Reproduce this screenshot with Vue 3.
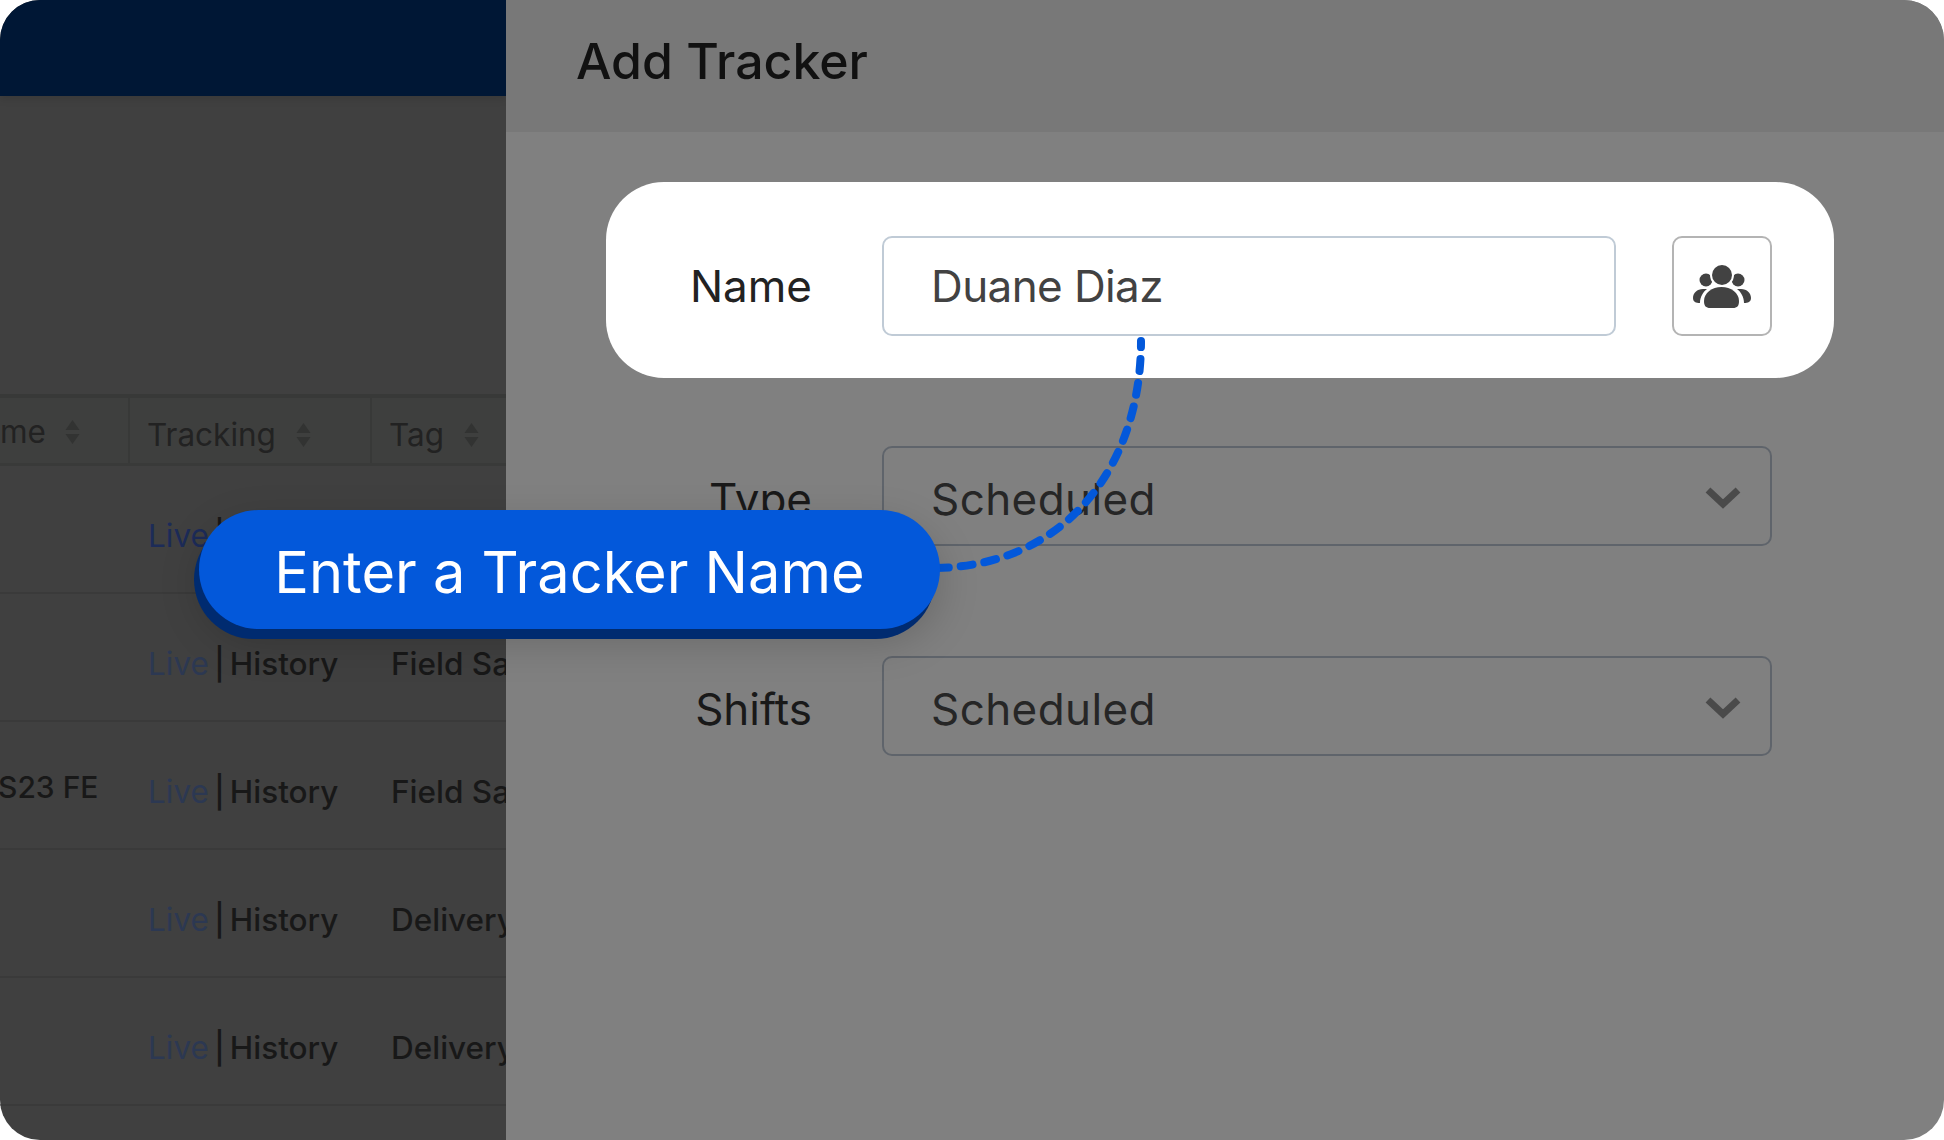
<script setup>
const rows = [
  { device: '', tag: '', dark: true },
  { device: '', tag: 'Field Sales' },
  { device: 'S23 FE', tag: 'Field Sales' },
  { device: '', tag: 'Delivery' },
  { device: '', tag: 'Delivery' }
]

const fields = [
  { label: 'Type', value: 'Scheduled' },
  { label: 'Shifts', value: 'Scheduled' }
]
</script>

<template>
  <div class="page">
    <section class="list-pane">
      <div class="topbar"></div>
      <div class="table">
        <div class="thead">
          <div class="th th-first">
            <span>me</span>
            <svg class="sort" viewBox="0 0 14 24"><path d="M7 0l7 10H0zM7 24L0 14h14z" /></svg>
          </div>
          <div class="th th-tracking">
            <span>Tracking</span>
            <svg class="sort" viewBox="0 0 14 24"><path d="M7 0l7 10H0zM7 24L0 14h14z" /></svg>
          </div>
          <div class="th th-tag">
            <span>Tag</span>
            <svg class="sort" viewBox="0 0 14 24"><path d="M7 0l7 10H0zM7 24L0 14h14z" /></svg>
          </div>
        </div>
        <div v-for="(row, i) in rows" :key="i" class="tr">
          <div class="td-device">{{ row.device }}</div>
          <div class="td-track">
            <span class="live" :class="{ dark: row.dark }">Live</span>
            <span class="sep">|</span>
            <span>History</span>
          </div>
          <div class="td-tag">{{ row.tag }}</div>
        </div>
      </div>
    </section>

    <section class="form-pane">
      <header class="form-head">Add Tracker</header>
      <div class="form-body">
        <div class="name-card">
          <label class="label">Name</label>
          <div class="input">Duane Diaz</div>
          <button class="people-btn">
            <svg class="people" viewBox="0 0 58 43">
              <circle cx="13" cy="15" r="6.500" />
              <circle cx="45" cy="15" r="6.500" />
              <path d="M0 33c0-5 4-9 10-9h4c-4 3-7 8-7 14-4 0-7-1-7-5zM58 33c0-5-4-9-10-9h-4c4 3 7 8 7 14 4 0 7-1 7-5z" />
              <circle class="ring" cx="29" cy="10" r="10" />
              <path class="ring" d="M28.500 22C38 22 46 28 46 36c0 5-2 7-6 7H17c-4 0-6-2-6-7 0-8 8-14 17.500-14z" />
            </svg>
          </button>
        </div>
        <div v-for="field in fields" :key="field.label" class="field">
          <label class="label">{{ field.label }}</label>
          <div class="select">
            <span>{{ field.value }}</span>
            <svg class="chevron" viewBox="0 0 36 22"><path d="M3 3l15 14L33 3" /></svg>
          </div>
        </div>
      </div>
    </section>

    <svg class="connector" viewBox="0 0 1944 1140">
      <path d="M1141 341C1141 470 1062 568 932 568" />
    </svg>

    <div class="callout">Enter a Tracker Name</div>
  </div>
</template>

<style scoped>
.page {
  position: relative;
  width: 1944px;
  height: 1140px;
  display: flex;
  overflow: hidden;
  border-radius: 40px;
  font-family: Inter, "Liberation Sans", sans-serif;
}

.list-pane {
  width: 506px;
  flex-shrink: 0;
  background: #404040;
  overflow: hidden;
}

.topbar {
  height: 96px;
  background: #001735;
  box-shadow: 0 3px 8px rgba(0, 0, 0, 0.12);
}

.table {
  margin-top: 298px;
  font-size: 31.5px;
  color: #181818;
}

.thead {
  display: flex;
  height: 72px;
  background: #3e3f3e;
  border-top: 4px solid #383938;
  border-bottom: 3px solid #393a39;
  box-sizing: border-box;
  color: #222;
}

.th {
  display: flex;
  align-items: center;
  box-sizing: border-box;
  padding-top: 8px;
}

.th-first {
  width: 130px;
  border-right: 2px solid #383938;
  gap: 19px;
  padding-top: 2px;
}

.th-tracking {
  width: 242px;
  padding-left: 17px;
  border-right: 2px solid #383938;
  gap: 20px;
}

.th-tag {
  padding-left: 17px;
  gap: 20px;
}

.sort {
  width: 15px;
  height: 24px;
  fill: #323332;
}

.tr {
  display: flex;
  align-items: center;
  height: 128px;
  box-sizing: border-box;
  padding-top: 12px;
  border-bottom: 2px solid #3a3a3a;
  white-space: nowrap;
  font-weight: 500;
}

.td-device {
  width: 150px;
  flex-shrink: 0;
  margin-left: -2px;
  margin-top: -8px;
  font-size: 30px;
}

.td-track {
  width: 243px;
  flex-shrink: 0;
  display: flex;
  gap: 5px;
}

.live {
  font-weight: 400;
  color: #2c3852;
}

.live.dark {
  color: #1c2b58;
}

.form-pane {
  flex: 1;
  background: #808080;
}

.form-head {
  height: 132px;
  box-sizing: border-box;
  padding: 31px 0 0 70px;
  background: #787878;
  font-size: 50px;
  font-weight: 500;
  line-height: 60px;
  color: #111;
}

.form-body {
  padding: 50px 110px 0 100px;
}

.name-card {
  display: flex;
  align-items: center;
  height: 196px;
  box-sizing: border-box;
  padding: 12px 62px 0 0;
  margin-bottom: 68px;
  background: #fff;
  border-radius: 58px;
}

.label {
  width: 206px;
  flex-shrink: 0;
  text-align: right;
  font-size: 44px;
  color: #191919;
}

.name-card .label {
  color: #222;
}

.input {
  width: 734px;
  height: 100px;
  margin-left: 70px;
  box-sizing: border-box;
  padding-left: 47px;
  display: flex;
  align-items: center;
  border: 2px solid #c0cbd6;
  border-radius: 10px;
  font-size: 44px;
  letter-spacing: -0.6px;
  color: #424242;
}

.people-btn {
  width: 100px;
  height: 100px;
  margin-left: 56px;
  padding: 0;
  display: flex;
  align-items: center;
  justify-content: center;
  background: #fff;
  border: 2px solid #b4b4b4;
  border-radius: 10px;
}

.people {
  width: 58px;
  height: 43px;
  fill: #424242;
}

.ring {
  stroke: #fff;
  stroke-width: 4;
  paint-order: stroke;
}

.field {
  display: flex;
  align-items: center;
  margin-bottom: 110px;
}

.field .label {
  padding-top: 5px;
}

.select {
  width: 890px;
  height: 100px;
  margin-left: 70px;
  box-sizing: border-box;
  padding: 0 29px 0 47px;
  display: flex;
  align-items: center;
  justify-content: space-between;
  border: 2px solid #5f646b;
  border-radius: 10px;
  font-size: 44px;
  letter-spacing: 0.4px;
  color: #262626;
}

.select span {
  padding-top: 5px;
}

.chevron {
  width: 36px;
  height: 22px;
  margin-top: 3px;
  fill: none;
  stroke: #4a4a4a;
  stroke-width: 7;
}

.connector {
  position: absolute;
  inset: 0;
  width: 1944px;
  height: 1140px;
  fill: none;
  stroke: #0358da;
  stroke-width: 8;
  stroke-linecap: round;
  stroke-dasharray: 12 12;
  stroke-dashoffset: 6;
}

.callout {
  position: absolute;
  left: 199px;
  top: 510px;
  width: 741px;
  height: 119px;
  box-sizing: border-box;
  padding-top: 4px;
  display: flex;
  align-items: center;
  justify-content: center;
  border-radius: 60px;
  background: #0358da;
  box-shadow: -5px 10px 0 #002b70, 0 14px 40px rgba(0, 0, 0, 0.18);
  font-size: 57.7px;
  color: #fff;
}
</style>
